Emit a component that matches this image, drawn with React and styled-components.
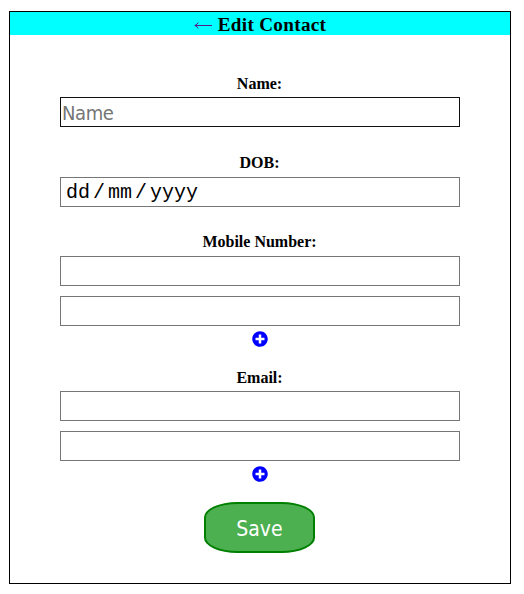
import React from "react";
import styled, { createGlobalStyle } from "styled-components";

const GlobalStyle = createGlobalStyle`
  * { box-sizing: border-box; }
  body { margin: 0; background: #fff; font-family: "Liberation Serif", serif; color: #000; }
`;

const Card = styled.main`
  display: flex;
  flex-direction: column;
  align-items: center;
  width: 502px;
  height: 573px;
  margin: 11px 0 0 9px;
  border: 1px solid #000;
`;

const Header = styled.h1`
  display: flex;
  align-items: center;
  justify-content: center;
  gap: 6px;
  width: 100%;
  height: 23px;
  margin: 0 0 1px;
  background: #0ff;
  font-size: 19.2px;
  line-height: 24px;
  letter-spacing: 0.3px;
`;

const Title = styled.span`
  padding-top: 2px;
`;

const BackArrow = styled.svg`
  display: block;
  margin-top: 4px;
`;

const Form = styled.form`
  display: flex;
  flex-direction: column;
  align-items: center;
  width: 400px;
`;

const Label = styled.label`
  height: 18px;
  margin-top: ${(p) => p.$gap}px;
  margin-bottom: ${(p) => p.$below || 5}px;
  padding-right: 1px;
  font-size: 16px;
  line-height: 18px;
  font-weight: bold;
`;

const Field = styled.input`
  display: block;
  width: 400px;
  height: 30px;
  margin: ${(p) => p.$gap || 0}px 0 0;
  padding: 3px 1px 1px;
  border: 1px solid ${(p) => (p.$strong ? "#101010" : "#767676")};
  border-radius: 0;
  outline: none;
  background: #fff;
  color: #000;
  font-family: "DejaVu Sans Condensed", "DejaVu Sans", sans-serif;
  font-stretch: condensed;
  font-size: 20px;
  letter-spacing: -0.4px;
  &::placeholder { color: #757575; opacity: 1; }
`;

const DateField = styled.div`
  display: flex;
  align-items: center;
  gap: 3px;
  width: 400px;
  height: 30px;
  padding: 0 5px;
  border: 1px solid #767676;
  font-family: "Liberation Mono", monospace;
  font-size: 20px;
`;

const AddButton = styled.button`
  display: block;
  width: 16px;
  height: 16px;
  margin: 5px 1px 0 0;
  padding: 0;
  border: 0;
  background: none;
  svg { display: block; }
`;

const SaveButton = styled.button`
  width: 111px;
  height: 51px;
  margin: 20px 1px 0 0;
  padding: 2px 0 0;
  border: 2px solid #008000;
  border-radius: 30%;
  background: #4caf50;
  color: #fff;
  font-family: "DejaVu Sans Condensed", "DejaVu Sans", sans-serif;
  font-stretch: condensed;
  font-size: 21px;
`;

const PlusCircle = () => (
  <svg width="16" height="16" viewBox="0 0 512 512" fill="#00f">
    <path d="M256 8C119 8 8 119 8 256s111 248 248 248 248-111 248-248S393 8 256 8zm144 276c0 6.600-5.400 12-12 12h-92v92c0 6.600-5.400 12-12 12h-56c-6.600 0-12-5.400-12-12v-92h-92c-6.600 0-12-5.400-12-12v-56c0-6.600 5.400-12 12-12h92v-92c0-6.600 5.400-12 12-12h56c6.600 0 12 5.400 12 12v92h92c6.600 0 12 5.400 12 12v56z" />
  </svg>
);

export default function App() {
  return (
    <>
      <GlobalStyle />
      <Card>
        <Header>
          <BackArrow width="18" height="7" viewBox="0 0 18 7" fill="none" stroke="#551a8b" role="img" aria-label="Back">
            <path d="M1 3.500H18M4.200 0.500Q3.200 2.700 0.800 3.500Q3.200 4.300 4.200 6.500" />
          </BackArrow>
          <Title>Edit Contact</Title>
        </Header>
        <Form>
          <Label $gap={39} $below={4}>Name:</Label>
          <Field $strong placeholder="Name" />
          <Label $gap={27}>DOB:</Label>
          <DateField><span>dd</span><span>/</span><span>mm</span><span>/</span><span>yyyy</span></DateField>
          <Label $gap={26}>Mobile Number:</Label>
          <Field />
          <Field $gap={10} />
          <AddButton type="button" aria-label="Add mobile number"><PlusCircle /></AddButton>
          <Label $gap={22} $below={4}>Email:</Label>
          <Field />
          <Field $gap={10} />
          <AddButton type="button" aria-label="Add email"><PlusCircle /></AddButton>
          <SaveButton type="button">Save</SaveButton>
        </Form>
      </Card>
    </>
  );
}
